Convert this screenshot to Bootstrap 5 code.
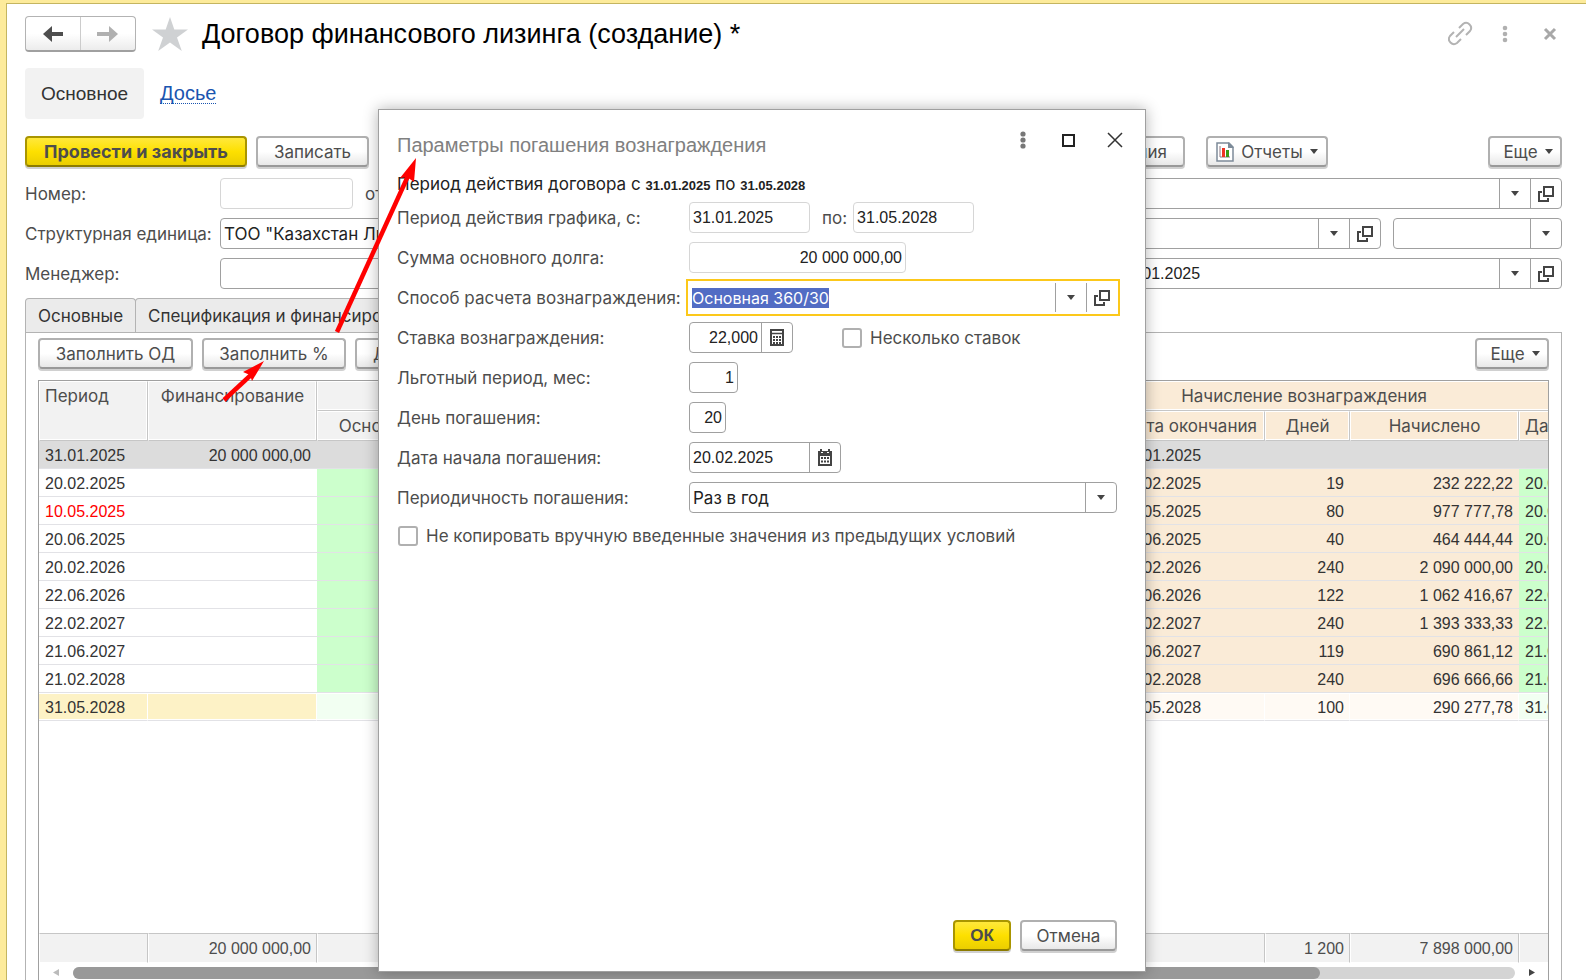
<!DOCTYPE html>
<html lang="ru">
<head>
<meta charset="utf-8">
<meta name="viewport" content="width=device-width, initial-scale=1">
<title>Договор финансового лизинга (создание) *</title>
<link href="https://cdn.jsdelivr.net/npm/bootstrap@5.3.0/dist/css/bootstrap.min.css" rel="stylesheet">
<style>
  :root { --line: #a0a0a0; --ink: #4d4d4d; --wide: Inter, "Liberation Sans", sans-serif; --plain: "Liberation Sans", Arial, sans-serif; }
  body { font-family: var(--wide); font-size: 17px; line-height: 20px; color: var(--ink); background: #fff; overflow: hidden; }
  .app-window { height: 100vh; min-height: 900px; border-top: 3px solid #fdeb9b; border-left: 6px solid #fdeb9b; }
  .app-inner { border-top: 1px solid #c4b560; border-left: 1px solid #c4b560; padding: 12px 24px 0 18px; min-height: 0; }
  .title-bar { height: 36px; }
  .title-bar h1 { font: 400 27px/36px var(--plain); color: #000; margin: 0 0 0 14px; }
  .history { border: 1px solid #b3b3b3; border-bottom: 2px solid #a0a0a0; border-radius: 4px; background: linear-gradient(#fff 50%, #ececec); width: 111px; height: 36px; }
  .plain-btn { border: 0; background: none; padding: 0; display: flex; align-items: center; justify-content: center; color: var(--ink); }
  .history button + button { border-left: 1px solid #ccc; }
  .sections { margin-top: 16px; font: 400 19px/51px var(--plain); }
  .section-on { color: #333; background: #f2f2f2; border-radius: 4px; width: 119px; text-align: center; }
  .sections a { color: #1a55b0; text-decoration: none; border-bottom: 1px dotted #1a55b0; font-size: 20px; line-height: 20px; }
  .commands { margin: 17px 0 11px; height: 31px; gap: 9px; }
  .tool-btn { font: 400 17px/20px var(--wide); color: var(--ink); height: 31px; padding: 0 16px; border: 2px solid #b0b0b0; border-bottom-color: #999; border-radius: 4px; background: linear-gradient(#fff 50%, #e8e8e8); box-shadow: 0 2px 0 #d0d0d0; white-space: nowrap; display: flex; align-items: center; justify-content: center; flex: none; }
  .tool-btn.main-btn { font-weight: 700; border-color: #a99500; border-bottom-color: #8c7b00; background: linear-gradient(#ffe83c, #fde000 50%, #ebce00); }
  .w-post { width: 222px; } .w-post.main-btn { font-size: 18px; }
  .tool-btn.more { padding: 0 6px 0 12px; width: 74px; gap: 7px; }
  .tool-btn.report { padding: 0 6px; width: 122px; gap: 7px; margin: 0 151px 0 12px; }
  .w-save { width: 113px; } .w-fill { width: 155px; } .w-rate { width: 144px; } .w-ok { width: 58px; } .w-cancel { width: 97px; }
  .tool-btn.w-ok { font: 700 17px/20px var(--plain); }
  .form-line { height: 31px; margin-bottom: 9px; display: flex; align-items: center; }
  .form-line > label:first-child { width: 195px; white-space: nowrap; flex: none; }
  .field { height: 31px; border: 1px solid var(--line); border-radius: 4px; background: #fff; display: flex; align-items: stretch; overflow: hidden; }
  .field.ro { border-color: #d6d6d6; }
  .field input, .field select { border: 0; outline: 0; background: transparent; padding: 0 3px; margin: 0; flex: 1 1 0; min-width: 0; font: 400 17px/20px var(--wide); color: #222; appearance: none; }
  .field .digits { font: 400 16px/20px var(--plain); }
  .field .plain-btn { width: 31px; flex: none; border-left: 1px solid var(--line); }
  .right-col { width: 460px; flex: none; }
  .right-col .form-line { gap: 12px; }
  .right-col .digits { padding-left: 17px; }
  .right-col .field { min-width: 0; }
  .right-col .w-cur { width: 169px; flex: none; }
  .right-col .fill { flex: 1 1 0; }
  .w-num { width: 133px; }
  .form-line > label.next { margin: 0 6px 0 12px; }
  .sheet-tabs button { font: 400 17px/20px var(--wide); color: #333; background: #ebebeb; border: 1px solid #b3b3b3; border-bottom: 0; border-radius: 4px 4px 0 0; height: 34px; padding: 0 12px; white-space: nowrap; }
  .sheet-tabs button + button { margin-left: -1px; }
  .sheet { border: 1px solid #b3b3b3; border-bottom: 0; padding: 5px 12px 0; min-height: 0; }
  .grid-box { border: 1px solid var(--line); border-bottom: 0; margin-top: 11px; overflow: hidden; min-height: 0; }
  .ledger { table-layout: fixed; width: 1576px; border-collapse: separate; border-spacing: 0; font: 400 16px/20px var(--plain); color: #333; }
  .ledger th { font: 400 17px/20px var(--wide); color: var(--ink); background: #f2f2f2; border: 1px solid #fff; border-right-color: #c6c6c6; border-bottom-color: #c6c6c6; padding: 0 4px; text-align: center; white-space: nowrap; overflow: hidden; box-shadow: inset -1px -1px 0 #fff; }
  .ledger thead tr { height: 30px; }
  .ledger th.top { vertical-align: top; padding-top: 4px; }
  .ledger th.start { text-align: left; padding-left: 5px; }
  .ledger th.or { background: #faebd7; }
  .ledger tbody tr { height: 28px; }
  .ledger td { padding: 2px 6px 0; border-bottom: 1px solid #e2e2e6; white-space: nowrap; overflow: hidden; }
  .ledger .n { text-align: right; }
  .ledger .gr { background: #ccffcc; }
  .ledger .or { background: #faebd7; }
  .ledger .first td { background: #dcdcdc; }
  .ledger .last td { background: #fdf2c6; border-right: 1px solid #fff; box-shadow: inset 0 1px 0 #fff, inset 0 -1px 0 #fff; padding-right: 5px; }
  .ledger .last td.gr { background: #f2fff2; }
  .ledger .last td.or { background: #fffaf4; }
  .ledger .late { color: #f00; }
  .ledger.totals td { background: #f2f2f2; color: var(--ink); height: 30px; border: 1px solid #fff; border-top-color: #c6c6c6; border-right-color: #c6c6c6; padding: 1px 5px 0; }
  .scroll-line { height: 17px; padding: 2px 13px 0 14px; }
  .track { height: 12px; border-radius: 6px; background: #d4d4d4; margin: 0 14px; }
  .thumb { height: 12px; border-radius: 6px; background: #999; }
  .dialog-pane { position: absolute; left: 378px; top: 109px; width: 768px; height: 863px; background: #fff; border: 1px solid #a0a0a0; box-shadow: 0 0 14px rgba(0,0,0,.3); padding: 22px 28px 20px 18px; z-index: 5; }
  .dialog-pane h2 { font: 400 20px/26px var(--plain); color: #808080; margin: 0; }
  .pane-icons { gap: 24px; height: 16px; margin-right: -9px; }
  .dialog-pane .form-line > label:first-child { width: 292px; }
  .period-note { color: #222; margin: 16px 0 8px; height: 20px; line-height: 20px; }
  .period-note b { font: 700 13px/16px var(--plain); }
  .dialog-pane .form-line { flex: none; }
  .dialog-pane .focused { border: 2px solid #fcc81a; border-radius: 0; height: 37px; margin: 0 -3px; padding: 2px 1px; }
  .focused ::selection { background: #526cc4; color: #fff; }
  .field.focused input { font-size: 16px; }
  .tick { appearance: none; width: 20px; height: 20px; border: 2px solid #b0b0b0; border-radius: 3px; margin: 0 8px 0 1px; background: #fff; flex: none; }
  .rates { margin-left: 48px; }
  .w-date { width: 121px; } .w-sum { width: 217px; } .w-pct { width: 104px; } .w-mon { width: 49px; } .w-day { width: 37px; } .w-cal { width: 152px; }
  .pointer-layer { position: absolute; left: 0; top: 0; z-index: 6; pointer-events: none; }
</style>
</head>
<body>
<svg width="0" height="0" class="position-absolute" aria-hidden="true">
  <symbol id="open" viewBox="0 0 16 16"><g fill="none" stroke="#444" stroke-width="2"><path d="M6 1h9v9H6z"/><path d="M4 6H1v9h9v-3"/></g></symbol>
  <symbol id="down" viewBox="0 0 8 5"><path d="M0 0h8L4 5z" fill="#444"/></symbol>
  <symbol id="calc" viewBox="0 0 14 17"><path d="M1 1h12v15H1z" fill="none" stroke="#444" stroke-width="2"/><path d="M1 4.500h12" stroke="#444" stroke-width="1.500"/><path d="M3 8h8M3 11h8M3 14h8" stroke="#444" stroke-width="2" stroke-dasharray="2 1"/></symbol>
  <symbol id="cal" viewBox="0 0 14 17"><path d="M0 2h2V0h2v2h6V0h2v2h2v15H0z" fill="#444"/><path d="M2 7h10v8H2z" fill="#fff"/><path d="M3 9h8M3 12.500h8" stroke="#444" stroke-width="2" stroke-dasharray="2 1"/><path d="M3 3.500h2M9 3.500h2" stroke="#fff"/></symbol>
</svg>

<div class="app-window d-flex flex-column">
<main class="app-inner d-flex flex-column flex-grow-1">
  <header class="title-bar d-flex align-items-center">
    <div class="history d-flex">
      <button class="plain-btn flex-fill" aria-label="Назад"><svg width="22" height="16" viewBox="0 0 22 16"><path d="M1 8l9-8v6h11v4H10v6z" fill="#4d4d4d"/></svg></button>
      <button class="plain-btn flex-fill" aria-label="Вперед"><svg width="22" height="16" viewBox="0 0 22 16"><path d="M21 8l-9-8v6H0v4h12v6z" fill="#b0b0b0"/></svg></button>
    </div>
    <button class="plain-btn ms-3" aria-label="В избранное"><svg width="36" height="34" viewBox="0 0 36 34"><path d="M18 0l4.300 12.500H36L25 20.500 29.800 34 18 25.600 6.200 34 11 20.500 0 12.500h13.700z" fill="#cfd1d3"/></svg></button>
    <h1>Договор финансового лизинга (создание) *</h1>
    <div class="ms-auto d-flex align-items-center pe-1">
      <button class="plain-btn" aria-label="Ссылка"><svg width="26" height="26" viewBox="0 0 26 26" fill="none" stroke="#b3b3b3" stroke-width="2"><path d="M11 7l4-4a5 5 0 0 1 7 7l-4 4M13 18l-4 4a5 5 0 0 1-7-7l4-4M8 16l8-8"/></svg></button>
      <button class="plain-btn ms-4 me-4" aria-label="Меню"><svg width="16" height="18" viewBox="0 0 16 18" fill="#b0b0b0"><circle cx="7" cy="3" r="2.300"/><circle cx="7" cy="9" r="2.300"/><circle cx="7" cy="15" r="2.300"/></svg></button>
      <button class="plain-btn ms-1" aria-label="Закрыть"><svg width="16" height="14" viewBox="0 0 16 14"><path d="M3 2l10 10M13 2L3 12" stroke="#a8a8a8" stroke-width="3"/></svg></button>
    </div>
  </header>

  <nav class="sections d-flex align-items-center">
    <span class="section-on">Основное</span>
    <a href="#" class="ms-3">Досье</a>
  </nav>

  <div class="commands d-flex">
    <button class="tool-btn main-btn w-post">Провести и закрыть</button>
    <button class="tool-btn w-save">Записать</button>
    <button class="tool-btn ms-auto">Начисления</button>
    <button class="tool-btn report"><svg width="18" height="20" viewBox="0 0 18 20"><path d="M1 1h12l4 4v14H1z" fill="#fff" stroke="#7d8b99" stroke-width="1.500"/><path d="M12 0l6 6h-6z" fill="#7d8b99"/><path d="M4 4v11h10" fill="none" stroke="#8a7680"/><path d="M6 6h3v9H6z" fill="#ee3424"/><path d="M10 8h3v7h-3z" fill="#3a9a17"/></svg>Отчеты<svg width="8" height="5"><use href="#down"/></svg></button>
    <button class="tool-btn more">Еще<svg width="8" height="5"><use href="#down"/></svg></button>
  </div>

  <div class="d-flex">
    <div class="flex-grow-1">
      <div class="form-line"><label for="num">Номер:</label><div class="field ro w-num"><input id="num"></div><label class="next" for="from">от:</label><div class="field w-date"><input id="from"></div></div>
      <div class="form-line"><label for="unit">Структурная единица:</label><div class="field flex-grow-1 me-5"><input id="unit" value='ТОО "Казахстан Лизинг"'></div></div>
      <div class="form-line"><label for="mgr">Менеджер:</label><div class="field flex-grow-1 me-5"><input id="mgr"></div></div>
    </div>
    <div class="right-col">
      <div class="form-line"><div class="field fill"><input aria-label="Организация"><button class="plain-btn" aria-label="Выбрать"><svg width="8" height="5"><use href="#down"/></svg></button><button class="plain-btn" aria-label="Открыть"><svg width="16" height="16"><use href="#open"/></svg></button></div></div>
      <div class="form-line"><div class="field fill"><input aria-label="Контрагент"><button class="plain-btn" aria-label="Выбрать"><svg width="8" height="5"><use href="#down"/></svg></button><button class="plain-btn" aria-label="Открыть"><svg width="16" height="16"><use href="#open"/></svg></button></div>
        <div class="field w-cur"><select aria-label="Валюта"><option></option></select><button class="plain-btn" aria-label="Выбрать"><svg width="8" height="5"><use href="#down"/></svg></button></div></div>
      <div class="form-line"><div class="field fill"><input class="digits" aria-label="Условия" value="31.01.2025"><button class="plain-btn" aria-label="Выбрать"><svg width="8" height="5"><use href="#down"/></svg></button><button class="plain-btn" aria-label="Открыть"><svg width="16" height="16"><use href="#open"/></svg></button></div></div>
    </div>
  </div>

  <div class="sheet-tabs d-flex"><button>Основные</button><button>Спецификация и финансирование</button></div>
  <section class="sheet d-flex flex-column flex-grow-1">
    <div class="d-flex" style="gap:9px">
      <button class="tool-btn w-fill">Заполнить ОД</button>
      <button class="tool-btn w-rate">Заполнить %</button>
      <button class="tool-btn">Добавить</button>
      <button class="tool-btn more ms-auto">Еще<svg width="8" height="5"><use href="#down"/></svg></button>
    </div>
    <div class="grid-box d-flex flex-column flex-grow-1">
      <table class="ledger">
        <colgroup><col style="width:109px"><col style="width:169px"><col style="width:169px"><col style="width:338px"><col style="width:169px"><col style="width:122px"><col style="width:150px"><col style="width:85px"><col style="width:169px"><col style="width:96px"></colgroup>
        <thead>
          <tr><th rowspan="2" class="top start">Период</th><th rowspan="2" class="top">Финансирование</th><th colspan="2">Погашение</th><th rowspan="2" class="top">Остаток</th><th colspan="5" class="or">Начисление вознаграждения</th></tr>
          <tr><th>Основной долг</th><th>Итого</th><th class="or">Дата начала</th><th class="or">Дата окончания</th><th class="or">Дней</th><th class="or">Начислено</th><th class="or start">Дата</th></tr>
        </thead>
        <tbody>
          <tr class="first"><td>31.01.2025</td><td class="n">20 000 000,00</td><td></td><td></td><td></td><td></td><td>31.01.2025</td><td></td><td></td><td></td></tr>
          <tr><td>20.02.2025</td><td></td><td class="gr"></td><td class="gr"></td><td></td><td class="or"></td><td class="or">20.02.2025</td><td class="or n">19</td><td class="or n">232 222,22</td><td class="gr">20.02.2025</td></tr>
          <tr><td class="late">10.05.2025</td><td></td><td class="gr"></td><td class="gr"></td><td></td><td class="or"></td><td class="or">10.05.2025</td><td class="or n">80</td><td class="or n">977 777,78</td><td class="gr">20.05.2025</td></tr>
          <tr><td>20.06.2025</td><td></td><td class="gr"></td><td class="gr"></td><td></td><td class="or"></td><td class="or">20.06.2025</td><td class="or n">40</td><td class="or n">464 444,44</td><td class="gr">20.06.2025</td></tr>
          <tr><td>20.02.2026</td><td></td><td class="gr"></td><td class="gr"></td><td></td><td class="or"></td><td class="or">20.02.2026</td><td class="or n">240</td><td class="or n">2 090 000,00</td><td class="gr">20.02.2026</td></tr>
          <tr><td>22.06.2026</td><td></td><td class="gr"></td><td class="gr"></td><td></td><td class="or"></td><td class="or">22.06.2026</td><td class="or n">122</td><td class="or n">1 062 416,67</td><td class="gr">22.06.2026</td></tr>
          <tr><td>22.02.2027</td><td></td><td class="gr"></td><td class="gr"></td><td></td><td class="or"></td><td class="or">22.02.2027</td><td class="or n">240</td><td class="or n">1 393 333,33</td><td class="gr">22.02.2027</td></tr>
          <tr><td>21.06.2027</td><td></td><td class="gr"></td><td class="gr"></td><td></td><td class="or"></td><td class="or">21.06.2027</td><td class="or n">119</td><td class="or n">690 861,12</td><td class="gr">21.06.2027</td></tr>
          <tr><td>21.02.2028</td><td></td><td class="gr"></td><td class="gr"></td><td></td><td class="or"></td><td class="or">21.02.2028</td><td class="or n">240</td><td class="or n">696 666,66</td><td class="gr">21.02.2028</td></tr>
          <tr class="last"><td>31.05.2028</td><td></td><td class="gr"></td><td class="gr"></td><td></td><td class="or"></td><td class="or">31.05.2028</td><td class="or n">100</td><td class="or n">290 277,78</td><td class="gr">31.05.2028</td></tr>
        </tbody>
      </table>
      <table class="ledger totals mt-auto">
        <colgroup><col style="width:109px"><col style="width:169px"><col style="width:169px"><col style="width:338px"><col style="width:169px"><col style="width:122px"><col style="width:150px"><col style="width:85px"><col style="width:169px"><col style="width:96px"></colgroup>
        <tr><td></td><td class="n">20 000 000,00</td><td class="n">20 000 000,00</td><td></td><td></td><td></td><td></td><td class="n">1 200</td><td class="n">7 898 000,00</td><td></td></tr>
      </table>
      <div class="scroll-line d-flex align-items-center">
        <svg width="6" height="7"><path d="M6 0v7L0 3.500z" fill="#bbb"/></svg>
        <div class="track flex-grow-1"><div class="thumb" style="width:86.500%"></div></div>
        <svg width="6" height="7"><path d="M0 0v7l6-3.500z" fill="#444"/></svg>
      </div>
    </div>
  </section>
</main>
</div>

<div class="dialog-pane d-flex flex-column" role="dialog" aria-labelledby="dlg-title">
  <div class="d-flex justify-content-between">
    <h2 id="dlg-title">Параметры погашения вознаграждения</h2>
    <div class="pane-icons d-flex align-items-center">
      <button class="plain-btn" aria-label="Меню"><svg width="22" height="18" viewBox="0 0 22 18" fill="#777"><circle cx="11" cy="3" r="2.600"/><circle cx="11" cy="9" r="2.600"/><circle cx="11" cy="15" r="2.600"/></svg></button>
      <button class="plain-btn" aria-label="Развернуть"><svg width="22" height="14"><path d="M5 2h11v11H5z" fill="none" stroke="#222" stroke-width="2"/></svg></button>
      <button class="plain-btn" aria-label="Закрыть"><svg width="22" height="16"><path d="M4 1l14 14M18 1L4 15" stroke="#333" stroke-width="1.500"/></svg></button>
    </div>
  </div>
  <p class="period-note">Период действия договора с <b>31.01.2025</b> по <b>31.05.2028</b></p>
  <div class="form-line"><label for="d1">Период действия графика, с:</label><div class="field ro w-date"><input id="d1" class="digits" value="31.01.2025"></div><label class="next" for="d2">по:</label><div class="field ro w-date"><input id="d2" class="digits" value="31.05.2028"></div></div>
  <div class="form-line"><label for="sum">Сумма основного долга:</label><div class="field ro w-sum"><input id="sum" class="digits text-end" value="20 000 000,00"></div></div>
  <div class="form-line"><label for="way">Способ расчета вознаграждения:</label><div class="field focused flex-grow-1"><input id="way" value="Основная 360/30"><button class="plain-btn" aria-label="Выбрать"><svg width="8" height="5"><use href="#down"/></svg></button><button class="plain-btn" aria-label="Открыть"><svg width="16" height="16"><use href="#open"/></svg></button></div></div>
  <div class="form-line"><label for="pct">Ставка вознаграждения:</label><div class="field w-pct"><input id="pct" class="digits text-end" value="22,000"><button class="plain-btn" aria-label="Калькулятор"><svg width="14" height="17"><use href="#calc"/></svg></button></div><div class="rates d-flex align-items-center"><input type="checkbox" class="tick" id="many"><label for="many">Несколько ставок</label></div></div>
  <div class="form-line"><label for="mon">Льготный период, мес:</label><div class="field w-mon"><input id="mon" class="digits text-end" value="1"></div></div>
  <div class="form-line"><label for="day">День погашения:</label><div class="field w-day"><input id="day" class="digits text-end" value="20"></div></div>
  <div class="form-line"><label for="beg">Дата начала погашения:</label><div class="field w-cal"><input id="beg" class="digits" value="20.02.2025"><button class="plain-btn" aria-label="Календарь"><svg width="14" height="17"><use href="#cal"/></svg></button></div></div>
  <div class="form-line"><label for="per">Периодичность погашения:</label><div class="field flex-grow-1"><select id="per"><option>Раз в год</option></select><button class="plain-btn" aria-label="Выбрать"><svg width="8" height="5"><use href="#down"/></svg></button></div></div>
  <div class="d-flex align-items-center pt-1"><input type="checkbox" class="tick" id="keep"><label for="keep">Не копировать вручную введенные значения из предыдущих условий</label></div>
  <div class="d-flex justify-content-end mt-auto" style="gap:9px"><button class="tool-btn main-btn w-ok">ОК</button><button class="tool-btn w-cancel">Отмена</button></div>
</div>

<svg class="pointer-layer" width="440" height="420" viewBox="0 0 440 420" aria-hidden="true">
  <g stroke="#f00" stroke-width="4.500"><path d="M337 332L408 176"/><path d="M224 400L252 374"/></g>
  <path d="M416 158L400 178L407 177L414 182z M264 361L243 372L250 375L252 381z" fill="#f00"/>
</svg>
<script src="https://cdn.jsdelivr.net/npm/bootstrap@5.3.0/dist/js/bootstrap.bundle.min.js"></script>
<script>
  const way = document.getElementById('way');
  way.focus({ preventScroll: true });
  way.select();
</script>
</body>
</html>
